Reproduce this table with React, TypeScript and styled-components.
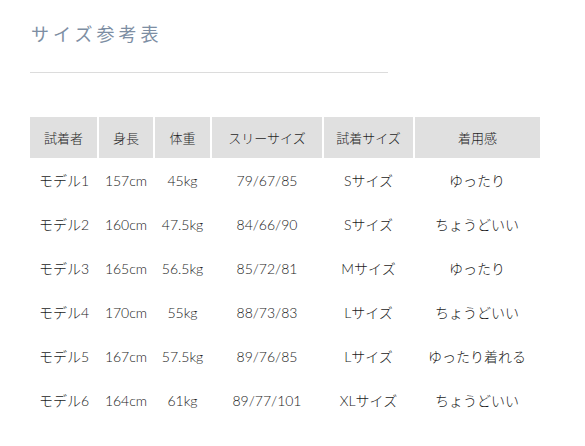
import React from "react";
import styled, { createGlobalStyle } from "styled-components";

const Global = createGlobalStyle`
    body {
        margin: 0;
        background: #ffffff;
        font-family: Lato, "Noto Sans CJK JP", sans-serif;
        color: #333333;
    }
`

const Page = styled.section`
    display: flex;
    flex-direction: column;
    align-items: flex-start;
    padding: 19px 0 0 30px;
`
const Title = styled.h2`
    margin: 0 0 0 1px;
    font-family: "Noto Sans CJK JP", sans-serif;
    font-weight: 400;
    font-size: 18px;
    line-height: 28px;
    letter-spacing: 4px;
    color: #7d8ea3;
`
const Rule = styled.hr`
    width: 358px;
    margin: 25px 0 44px;
    border: none;
    border-top: 1px solid #dcdcdc;
`
const Table = styled.table`
    border-collapse: collapse;
    table-layout: fixed;
    width: 510px;
    font-family: Lato, "Noto Sans CJK JP", sans-serif;
    font-size: 14px;
    font-weight: 300;
`
const Head = styled.th<{ w: number }>`
    width: ${(props) => props.w}px;
    height: 41px;
    padding: 0;
    background-color: #e0e0e0;
    border-left: 2px solid #ffffff;
    font-weight: 300;
    font-size: 13px;
    font-family: "Noto Sans CJK JP", sans-serif;
    color: #1f1f1f;
    text-align: center;
    &:first-child {
        border-left: none;
    }
`
const Cell = styled.td`
    height: 44px;
    padding: 0;
    text-align: center;
    white-space: nowrap;
    color: #1a1a1a;
`

interface Row {
    name: string,
    height: string,
    weight: string,
    sizes: string,
    fit: string,
    feel: string
}

// widths exclude the 2px white divider
const columns = [
    { label: "試着者", w: 67 },
    { label: "身長", w: 54 },
    { label: "体重", w: 55 },
    { label: "スリーサイズ", w: 110 },
    { label: "試着サイズ", w: 89 },
    { label: "着用感", w: 125 },
]

const rows: Row[] = [
    { name: "モデル1", height: "157cm", weight: "45kg", sizes: "79/67/85", fit: "Sサイズ", feel: "ゆったり" },
    { name: "モデル2", height: "160cm", weight: "47.5kg", sizes: "84/66/90", fit: "Sサイズ", feel: "ちょうどいい" },
    { name: "モデル3", height: "165cm", weight: "56.5kg", sizes: "85/72/81", fit: "Mサイズ", feel: "ゆったり" },
    { name: "モデル4", height: "170cm", weight: "55kg", sizes: "88/73/83", fit: "Lサイズ", feel: "ちょうどいい" },
    { name: "モデル5", height: "167cm", weight: "57.5kg", sizes: "89/76/85", fit: "Lサイズ", feel: "ゆったり着れる" },
    { name: "モデル6", height: "164cm", weight: "61kg", sizes: "89/77/101", fit: "XLサイズ", feel: "ちょうどいい" },
]

const App: React.FC = () => {
    return (
        <Page>
            <Global />
            <Title>サイズ参考表</Title>
            <Rule />
            <Table>
                <thead>
                    <tr>
                        {columns.map((c) => (
                            <Head key={c.label} w={c.w}>{c.label}</Head>
                        ))}
                    </tr>
                </thead>
                <tbody>
                    {rows.map((r) => (
                        <tr key={r.name}>
                            <Cell>{r.name}</Cell>
                            <Cell>{r.height}</Cell>
                            <Cell>{r.weight}</Cell>
                            <Cell>{r.sizes}</Cell>
                            <Cell>{r.fit}</Cell>
                            <Cell>{r.feel}</Cell>
                        </tr>
                    ))}
                </tbody>
            </Table>
        </Page>
    )
}

export default App
